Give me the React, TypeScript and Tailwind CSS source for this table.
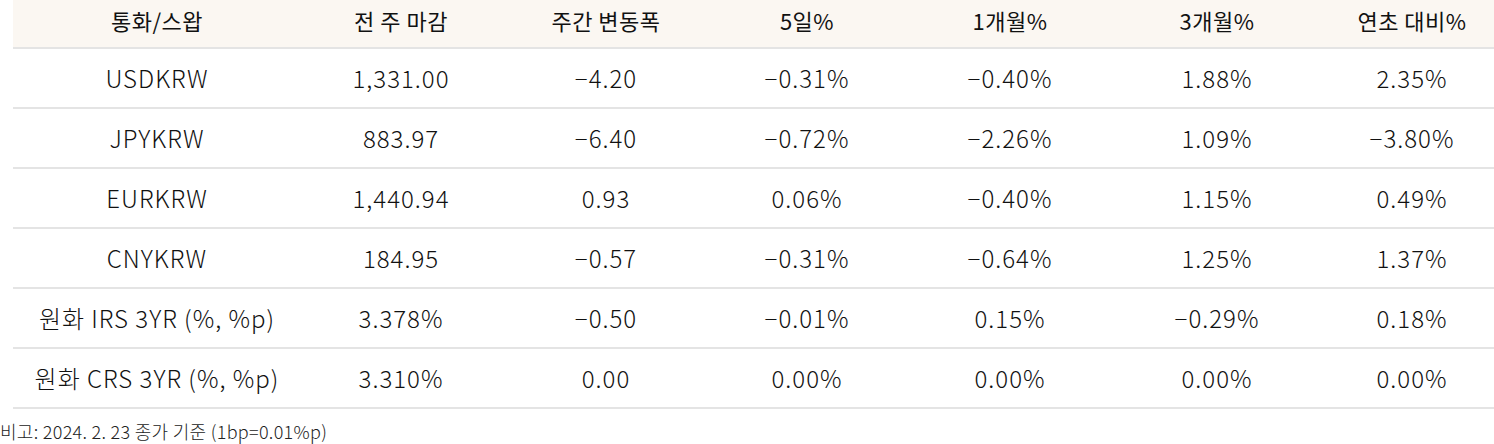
const HEADERS = ['통화/스왑', '전 주 마감', '주간 변동폭', '5일%', '1개월%', '3개월%', '연초 대비%'];

const ROWS: string[][] = [
  ['USDKRW', '1,331.00', '−4.20', '−0.31%', '−0.40%', '1.88%', '2.35%'],
  ['JPYKRW', '883.97', '−6.40', '−0.72%', '−2.26%', '1.09%', '−3.80%'],
  ['EURKRW', '1,440.94', '0.93', '0.06%', '−0.40%', '1.15%', '0.49%'],
  ['CNYKRW', '184.95', '−0.57', '−0.31%', '−0.64%', '1.25%', '1.37%'],
  ['원화 IRS 3YR (%, %p)', '3.378%', '−0.50', '−0.01%', '0.15%', '−0.29%', '0.18%'],
  ['원화 CRS 3YR (%, %p)', '3.310%', '0.00', '0.00%', '0.00%', '0.00%', '0.00%'],
];

// column widths picked so each cell's centre lands where the reference has it
const GRID = 'grid grid-cols-[288px_200px_210px_192px_214px_200px_177px]';
const FONT = "font-['Noto_Sans_CJK_KR',sans-serif]";

function Cell({ children, last }: { children: React.ReactNode; last?: boolean }) {
  return (
    <div className={`flex items-center justify-center whitespace-nowrap ${last ? 'pl-[13px]' : ''}`}>
      {children}
    </div>
  );
}

export default function App() {
  return (
    <div className={`h-[444px] w-[1494px] bg-white text-[#111] ${FONT}`}>
      <div className="ml-[13px] w-[1481px]">
        <div className={`${GRID} h-[49px] border-b-2 border-[#e4e4e4] bg-[#fbf7f2] text-[22px] font-normal tracking-[0.5px]`}>
          {HEADERS.map((h, i) => (
            <Cell key={h} last={i === HEADERS.length - 1}>
              <span className="-mt-[6px]">{h}</span>
            </Cell>
          ))}
        </div>
        {ROWS.map((row) => (
          <div
            key={row[0]}
            className={`${GRID} h-[60px] border-b-2 border-[#e4e4e4] text-[24px] font-light tracking-[1px]`}
          >
            {row.map((v, i) => (
              <Cell key={i} last={i === row.length - 1}>
                {v}
              </Cell>
            ))}
          </div>
        ))}
      </div>
      <p className="pt-[11px] text-[18px] font-light leading-[22px] tracking-[0.3px] text-[#222]">
        비고: 2024. 2. 23 종가 기준 (1bp=0.01%p)
      </p>
    </div>
  );
}
